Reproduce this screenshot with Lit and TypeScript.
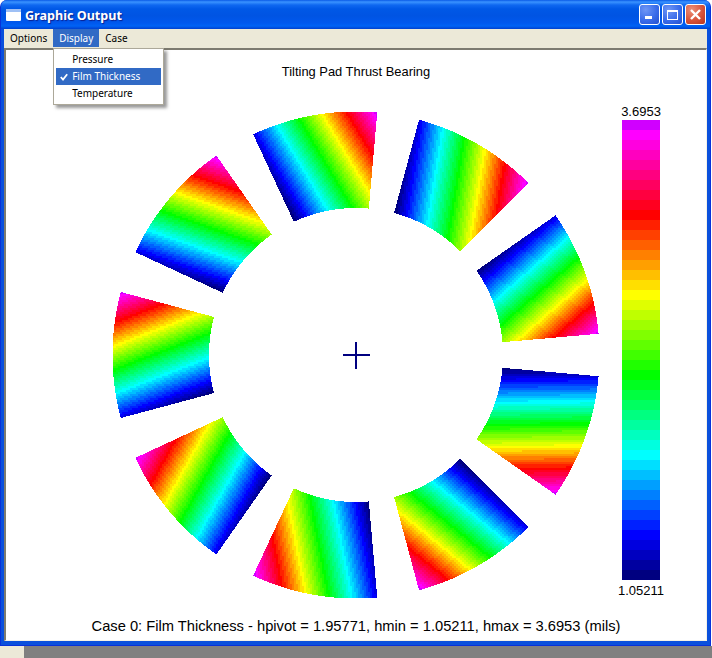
import { LitElement, html, css, svg } from "lit";
import { customElement } from "lit/decorators.js";

const BAND_COUNT = 46;

function bandColor(i: number): string {
  const stops: [number, number[]][] = [
    [0, [0, 0, 128]],
    [4, [0, 0, 255]],
    [12, [0, 255, 255]],
    [20, [0, 255, 0]],
    [28, [255, 255, 0]],
    [36, [255, 0, 0]],
    [44, [255, 0, 255]],
    [45, [208, 0, 255]],
  ];
  for (let s = 0; s < stops.length - 1; s++) {
    const [a, ca] = stops[s];
    const [b, cb] = stops[s + 1];
    if (i <= b) {
      const f = (i - a) / (b - a);
      const c = ca.map((v, k) => Math.round(v + (cb[k] - v) * f));
      return `rgb(${c[0]},${c[1]},${c[2]})`;
    }
  }
  return "rgb(208,0,255)";
}

const CX = 356;
const CY = 355;
const R_OUT = 243.5;
const R_IN = 147;
const HALF_SPAN = 15;
const PAD_CENTERS = [-10, 30, 70, 110, 150, 190, 230, 270, 310];
const CELL = 2;

/** Maps a page pixel to a colour band, or -1 when it lies outside every pad. */
function bandAt(x: number, y: number): number {
  const dx = x + 0.5 - CX;
  const dy = y + 0.5 - CY;
  const r = Math.hypot(dx, dy);
  if (r > R_OUT || r < R_IN) return -1;
  const ang = (Math.atan2(dx, -dy) * 180) / Math.PI;
  for (const c of PAD_CENTERS) {
    let rel = ang - c;
    while (rel > 180) rel -= 360;
    while (rel < -180) rel += 360;
    if (Math.abs(rel) > HALF_SPAN) continue;
    const sx = Math.floor(x / CELL) * CELL + CELL / 2 - CX;
    const sy = Math.floor(y / CELL) * CELL + CELL / 2 - CY;
    const lead = ((c - HALF_SPAN) * Math.PI) / 180;
    const v = sx * Math.sin(lead) - sy * Math.cos(lead);
    const u = sx * Math.cos(lead) + sy * Math.sin(lead);
    const t = 0.0078 * u + 0.0008 * v - 0.12;
    return Math.max(0, Math.min(BAND_COUNT - 1, Math.floor(t * BAND_COUNT)));
  }
  return -1;
}

function buildBandPaths(): string[] {
  const parts: string[][] = Array.from({ length: BAND_COUNT }, () => []);
  for (let y = 100; y < 610; y++) {
    let start = 0;
    let cur = -1;
    for (let x = 100; x <= 610; x++) {
      const b = x === 610 ? -1 : bandAt(x, y);
      if (b !== cur) {
        if (cur >= 0) parts[cur].push(`M${start} ${y}H${x}V${y + 1}H${start}Z`);
        start = x;
        cur = b;
      }
    }
  }
  return parts.map((p) => p.join(""));
}

const BAND_PATHS = buildBandPaths();
const BAR_BANDS = Array.from({ length: BAND_COUNT }, (_, i) => bandColor(BAND_COUNT - 1 - i));

@customElement("app-root")
export class AppRoot extends LitElement {
  static styles = css`
    :host {
      display: block;
      width: 712px;
      height: 658px;
      background: #fff;
      overflow: hidden;
      font-family: "Liberation Sans", Arial, sans-serif;
    }
    .window {
      box-sizing: border-box;
      width: 711px;
      height: 646px;
      display: flex;
      flex-direction: column;
      background: #0a50dc;
      border-radius: 7px 7px 0 0;
      overflow: hidden;
      border: solid #0831d9;
      border-width: 0 1px 1px 1px;
    }
    .titlebar {
      height: 29px;
      flex: none;
      margin: 0 -1px;
      padding: 0 5px 0 6px;
      display: flex;
      align-items: center;
      gap: 4px;
      background: linear-gradient(
        to bottom,
        #0a5ae6 0,
        #3a93ff 2px,
        #0f68f0 5px,
        #0058e6 9px,
        #0054e3 16px,
        #0058ee 23px,
        #0063f5 26px,
        #0040cf 29px
      );
    }
    .app-icon {
      display: block;
      flex: none;
    }
    .title {
      flex: 1;
      padding-top: 2px;
      color: #fff;
      font-family: "Noto Sans", sans-serif;
      font-weight: 700;
      font-size: 12.6px;
      text-shadow: 1px 1px 1px #0a1f8f;
      white-space: nowrap;
    }
    .controls {
      display: flex;
      gap: 2px;
    }
    .ctl {
      box-sizing: border-box;
      width: 21px;
      height: 21px;
      border: 1px solid #fff;
      border-radius: 3px;
      background: radial-gradient(circle at 30% 25%, #6f96f5 0, #3a6cea 55%, #2450cf 100%);
      display: flex;
      align-items: center;
      justify-content: center;
    }
    .ctl.close {
      background: radial-gradient(circle at 30% 25%, #ec9078 0, #d9543a 55%, #b8351c 100%);
    }
    .ctl svg {
      display: block;
    }
    .body {
      flex: 1;
      min-height: 0;
      margin: 0 3px 4px 3px;
      display: flex;
      flex-direction: column;
    }
    .menubar {
      height: 19px;
      flex: none;
      display: flex;
      background: #ece9d8;
      font-family: "Noto Sans", sans-serif;
      font-size: 10px;
      color: #000;
    }
    .menu-item {
      position: relative;
      height: 18px;
      padding: 0 6px;
      line-height: 18px;
    }
    .menu-item.open {
      background: #316ac5;
      color: #fff;
    }
    .dropdown {
      position: absolute;
      z-index: 5;
      top: 19px;
      left: 0;
      width: 111px;
      height: 57px;
      box-sizing: border-box;
      padding: 2px 2px;
      background: #fff;
      border: 1px solid #aca899;
      box-shadow: 3px 3px 3px rgba(70, 70, 70, 0.55);
      color: #000;
    }
    .dd-row {
      height: 17px;
      line-height: 17px;
      display: flex;
      align-items: center;
    }
    .dd-row.active {
      background: #316ac5;
      color: #fff;
    }
    .dd-check {
      width: 16px;
      flex: none;
      display: flex;
      justify-content: center;
    }
    .client {
      position: relative;
      flex: 1;
      min-height: 0;
      display: flex;
      flex-direction: column;
      align-items: center;
      background: #fff;
      color: #000;
      border-style: solid;
      border-width: 2px 1px 1px 2px;
      border-color: #7d7b70 #f4f2e8 #f4f2e8 #7d7b70;
    }
    .plot {
      position: absolute;
      left: 0;
      top: 0;
      width: 700px;
      height: 591px;
    }
    .plot-title {
      position: relative;
      margin-top: 15px;
      font-size: 12.9px;
      line-height: 14px;
    }
    .scale {
      position: relative;
      align-self: flex-end;
      margin: 25px 46px 0 0;
      width: 38px;
      display: flex;
      flex-direction: column;
      align-items: center;
      font-size: 13px;
    }
    .scale-label {
      height: 14px;
      line-height: 16px;
      white-space: nowrap;
    }
    .bar {
      width: 38px;
      margin: 2px 0 3px;
      display: flex;
      flex-direction: column;
    }
    .band {
      height: 10px;
    }
    .caption {
      position: relative;
      margin-top: auto;
      padding-bottom: 6px;
      font-size: 14.7px;
      line-height: 16px;
      white-space: nowrap;
    }
    .strip {
      height: 12px;
      background: #808080;
    }
    .strip-tab {
      width: 24px;
      height: 12px;
      background: #ece9d8;
    }
  `;

  render() {
    return html`
      <div class="window">
        <div class="titlebar">
          <svg class="app-icon" width="15" height="12" viewBox="0 0 15 12">
            <rect width="15" height="12" rx="1" fill="#fff" />
            <rect width="15" height="3" fill="#9fc0f5" />
          </svg>
          <div class="title">Graphic Output</div>
          <div class="controls">
            <div class="ctl">
              <svg width="13" height="13" viewBox="0 0 13 13"><rect x="2" y="8" width="7" height="3" fill="#fff" /></svg>
            </div>
            <div class="ctl">
              <svg width="13" height="13" viewBox="0 0 13 13">
                <rect x="1.5" y="2.5" width="10" height="9" fill="none" stroke="#fff" />
                <rect x="1" y="2" width="11" height="2" fill="#fff" />
              </svg>
            </div>
            <div class="ctl close">
              <svg width="13" height="13" viewBox="0 0 13 13">
                <path d="M2 2L11 11M11 2L2 11" stroke="#fff" stroke-width="2.4" fill="none" />
              </svg>
            </div>
          </div>
        </div>
        <div class="body">
          <div class="menubar">
            <div class="menu-item">Options</div>
            <div class="menu-item open">
              Display
              <div class="dropdown">
                <div class="dd-row"><span class="dd-check"></span>Pressure</div>
                <div class="dd-row active">
                  <span class="dd-check">
                    <svg width="8" height="8" viewBox="0 0 8 8">
                      <path d="M0.8 4L3 6.5L7.2 1.2" fill="none" stroke="#fff" stroke-width="1.8" />
                    </svg>
                  </span>
                  Film Thickness
                </div>
                <div class="dd-row"><span class="dd-check"></span>Temperature</div>
              </div>
            </div>
            <div class="menu-item">Case</div>
          </div>
          <div class="client">
            <svg class="plot" viewBox="6 50 700 591" shape-rendering="crispEdges">
              ${BAND_PATHS.map((d, i) => (d ? svg`<path d=${d} fill=${bandColor(i)} />` : null))}
              <rect x="343" y="354" width="27" height="2" fill="#000080" />
              <rect x="355" y="342" width="2" height="27" fill="#000080" />
            </svg>
            <div class="plot-title">Tilting Pad Thrust Bearing</div>
            <div class="scale">
              <div class="scale-label">3.6953</div>
              <div class="bar">
                ${BAR_BANDS.map((c) => html`<div class="band" style="background:${c}"></div>`)}
              </div>
              <div class="scale-label">1.05211</div>
            </div>
            <div class="caption">Case 0: Film Thickness - hpivot = 1.95771, hmin = 1.05211, hmax = 3.6953 (mils)</div>
          </div>
        </div>
      </div>
      <div class="strip"><div class="strip-tab"></div></div>
    `;
  }
}
